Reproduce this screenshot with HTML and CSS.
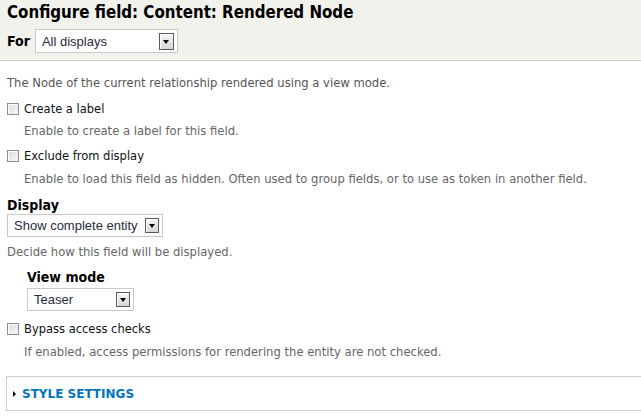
FILE: index.html
```html
<!DOCTYPE html>
<html>
<head>
<meta charset="utf-8">
<link rel="stylesheet" href="styles.css">
</head>
<body>
<div class="page">
  <div class="header">
    <h1 class="title">Configure field: Content: Rendered Node</h1>
    <div class="for-row">
      <span class="for-label">For</span>
      <div class="select select-for"><span class="select-text">All displays</span><span class="select-btn"><span class="arrow"></span></span></div>
    </div>
  </div>
  <div class="content">
    <p class="intro">The Node of the current relationship rendered using a view mode.</p>
    <div class="check-item first">
      <span class="checkbox"></span><span class="check-label">Create a label</span>
    </div>
    <p class="desc indented">Enable to create a label for this field.</p>
    <div class="check-item second">
      <span class="checkbox"></span><span class="check-label">Exclude from display</span>
    </div>
    <p class="desc indented second-desc">Enable to load this field as hidden. Often used to group fields, or to use as token in another field.</p>
    <div class="field-label">Display</div>
    <div class="select select-display"><span class="select-text">Show complete entity</span><span class="select-btn"><span class="arrow"></span></span></div>
    <p class="desc decide">Decide how this field will be displayed.</p>
    <div class="sub">
      <div class="field-label view">View mode</div>
      <div class="select select-view"><span class="select-text">Teaser</span><span class="select-btn"><span class="arrow"></span></span></div>
    </div>
    <div class="check-item bypass">
      <span class="checkbox"></span><span class="check-label">Bypass access checks</span>
    </div>
    <p class="desc indented bypass-desc">If enabled, access permissions for rendering the entity are not checked.</p>
    <div class="fieldset">
      <span class="tri"></span><span class="legend">STYLE SETTINGS</span>
    </div>
  </div>
</div>
</body>
</html>
```

FILE: styles.css
```css
html, body {
  margin: 0;
  padding: 0;
  background: #fff;
}
body {
  font-family: "DejaVu Sans", sans-serif;
  font-size: 11.5px;
  color: #222;
  overflow: hidden;
}
.page {
  width: 641px;
  overflow: hidden;
}
.header {
  background: #f2f2ed;
  border-bottom: 1px solid #cccccc;
  height: 61px;
  padding: 2px 7px 0;
  box-sizing: border-box;
}
.title {
  margin: 0;
  font-family: "DejaVu Sans Condensed", "DejaVu Sans", sans-serif;
  font-size: 16.75px;
  line-height: 20px;
  font-weight: bold;
  color: #000;
}
.for-row {
  display: flex;
  align-items: center;
  gap: 5px;
  margin-top: 7px;
}
.for-label {
  font-family: "DejaVu Sans Condensed", "DejaVu Sans", sans-serif;
  font-weight: bold;
  font-size: 14px;
  color: #000;
}
.select {
  display: flex;
  align-items: center;
  justify-content: space-between;
  background: #fff;
  border: 1px solid #c9c9c9;
  box-sizing: border-box;
  font-family: "Liberation Sans", Arial, sans-serif;
  font-size: 13px;
  color: #2b2b3a;
  padding: 0 3px 0 6px;
}
.select-for { width: 143px; height: 24px; }
.select-display { width: 156px; height: 23px; margin-left: 7px; }
.select-view { width: 107px; height: 23px; }
.select-btn {
  width: 14px;
  height: 15px;
  border: 1px solid #5a5a5a;
  background: linear-gradient(#f6f6f6, #d6d6d6);
  box-shadow: inset 1px 1px 0 #fff;
  display: flex;
  align-items: center;
  justify-content: center;
  box-sizing: border-box;
}
.select-for .select-btn { width: 15px; height: 17px; }
.arrow {
  width: 0;
  height: 0;
  border-left: 3.5px solid transparent;
  border-right: 3.5px solid transparent;
  border-top: 4px solid #000;
  margin-top: 1px;
}
p { margin: 0; }
.intro {
  margin: 14px 7px 0;
  line-height: 16px;
  font-size: 11.6px;
  color: #555;
}
.check-item {
  display: flex;
  align-items: center;
  height: 16px;
  margin: 10px 0 0 7px;
}
.check-item.first { margin-top: 10px; }
.check-item.second { margin-top: 9px; }
.check-item.bypass { margin-top: 10px; }
.checkbox {
  width: 12px;
  height: 12px;
  box-sizing: border-box;
  border: 1px solid #8f8f8f;
  background: linear-gradient(135deg, #dcdcdc, #f8f8f8);
  box-shadow: inset 1px 1px 0 #fff;
  margin-right: 5px;
}
.check-label {
  font-size: 11.5px;
  color: #111;
}
.desc {
  line-height: 16px;
  font-size: 11.6px;
  color: #666;
}
.indented {
  margin: 6px 0 0 24px;
}
.second-desc { margin-top: 7px; }
.bypass-desc { margin-top: 7px; }
.field-label {
  margin: 10px 0 0 7px;
  font-family: "DejaVu Sans Condensed", "DejaVu Sans", sans-serif;
  font-weight: bold;
  font-size: 14px;
  line-height: 16px;
  color: #000;
}
.select-display { margin-top: 1px; }
.decide {
  margin: 7px 0 0 7px;
}
.sub {
  margin-left: 27px;
}
.field-label.view {
  margin: 9px 0 0 0;
}
.select-view { margin-top: 3px; }
.fieldset {
  margin: 16px -10px 0 6px;
  height: 35px;
  box-sizing: border-box;
  border: 1px solid #cccccc;
  display: flex;
  align-items: center;
  padding-left: 6px;
}
.tri {
  width: 0;
  height: 0;
  border-top: 3.5px solid transparent;
  border-bottom: 3.5px solid transparent;
  border-left: 3.5px solid #000;
  margin-right: 6px;
}
.legend {
  font-weight: bold;
  font-size: 12px;
  color: #0074bd;
}
```
